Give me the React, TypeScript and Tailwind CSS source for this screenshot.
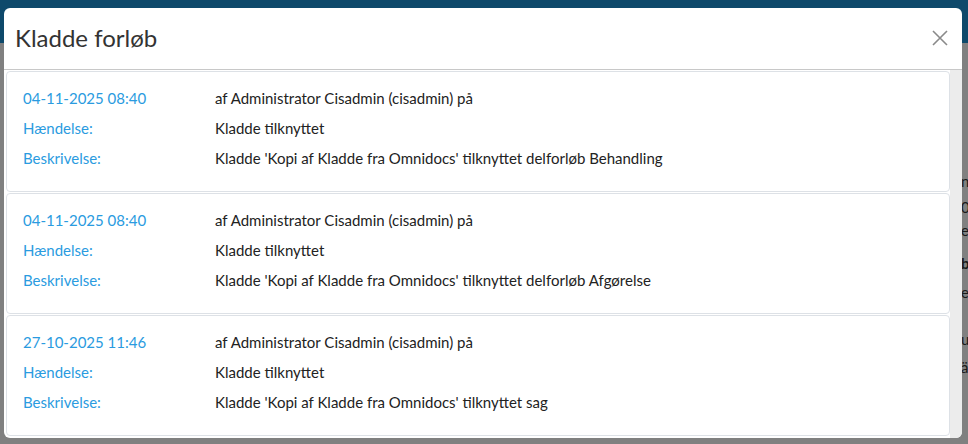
import React from "react";

const entries = [
  {
    date: "04-11-2025 08:40",
    by: "af Administrator Cisadmin (cisadmin) på",
    event: "Kladde tilknyttet",
    desc: "Kladde 'Kopi af Kladde fra Omnidocs' tilknyttet delforløb Behandling",
  },
  {
    date: "04-11-2025 08:40",
    by: "af Administrator Cisadmin (cisadmin) på",
    event: "Kladde tilknyttet",
    desc: "Kladde 'Kopi af Kladde fra Omnidocs' tilknyttet delforløb Afgørelse",
  },
  {
    date: "27-10-2025 11:46",
    by: "af Administrator Cisadmin (cisadmin) på",
    event: "Kladde tilknyttet",
    desc: "Kladde 'Kopi af Kladde fra Omnidocs' tilknyttet sag",
  },
];

function Row({ label, value }: { label: string; value: string }) {
  return (
    <div className="flex h-[30px] items-center">
      <div className="w-[192px] shrink-0 text-[#2a9be0]">{label}</div>
      <div className="text-[#222]">{value}</div>
    </div>
  );
}

export default function App() {
  return (
    <div
      className="relative h-[444px] w-[968px] overflow-hidden bg-[#808080] text-[15px]"
      style={{ fontFamily: "Lato, 'Open Sans', sans-serif" }}
    >
      {/* page behind the overlay */}
      <div className="h-[43px] bg-[#0e496b]" />
      <div className="flex flex-col items-start pl-[961px] pt-[131px] text-[15px] leading-none text-[#1a1a1a]">
        <span className="h-[26px]">n</span>
        <span className="h-[23px]">0.</span>
        <span className="h-[33px]">e</span>
        <span className="h-[29px] font-bold">b</span>
        <span className="h-[47px]">e</span>
        <span className="h-[28px]">u</span>
        <span>ä</span>
      </div>

      {/* modal */}
      <div className="absolute left-[4px] top-[8px] flex h-[430px] w-[958px] flex-col overflow-hidden rounded-[6px] bg-white">
        <div className="flex h-[62px] shrink-0 items-center justify-between border-b border-[#c8c8c8] pl-[11px] pr-[14px]">
          <h2 className="pb-[2px] text-[24px] text-[#333]">Kladde forløb</h2>
          <svg
            viewBox="0 0 16 16"
            className="mb-[2px] h-[16px] w-[16px] stroke-[#8a8a8a]"
            fill="none"
            strokeWidth={1.6}
          >
            <path d="M1 1l14 14M15 1L1 15" />
          </svg>
        </div>
        <div className="flex min-h-0 flex-1">
          <div className="flex flex-1 flex-col pl-[2px] pt-[1px]">
            {entries.map((e, i) => (
              <div
                key={i}
                className="mb-[1px] flex h-[121px] flex-col rounded-[4px] border border-[#dde1e6] bg-white pl-[16px] pt-[11px]"
              >
                <Row label={e.date} value={e.by} />
                <Row label="Hændelse:" value={e.event} />
                <Row label="Beskrivelse:" value={e.desc} />
              </div>
            ))}
          </div>
          <div className="w-[12px] shrink-0 bg-[#ececec]" />
        </div>
      </div>
    </div>
  );
}
